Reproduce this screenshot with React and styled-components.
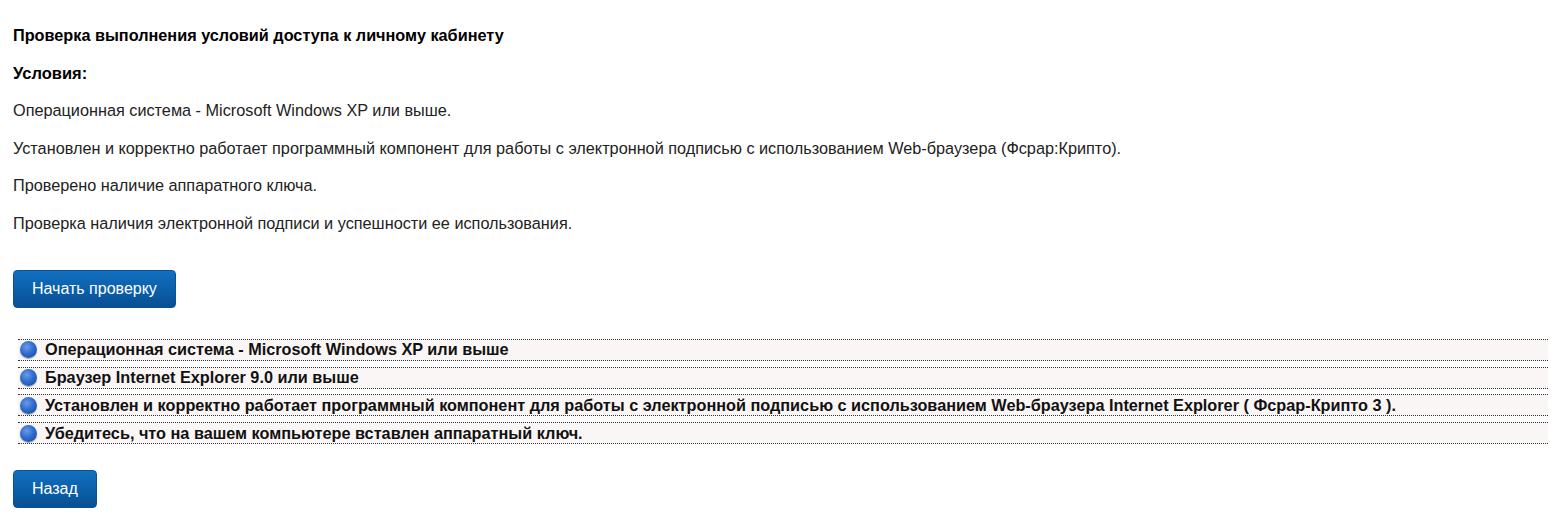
import React from 'react';
import styled, { createGlobalStyle } from 'styled-components';

const GlobalStyle = createGlobalStyle`
  html, body {
    margin: 0;
    padding: 0;
    background: #fff;
  }
  body {
    font-family: "Liberation Sans", Arial, sans-serif;
    color: #222;
  }
`;

const Page = styled.main`
  padding: 26px 12px 9px 13px;
  display: flex;
  flex-direction: column;
`;

const Intro = styled.section`
  display: flex;
  flex-direction: column;
  gap: 19.6px;
`;

const Heading = styled.h1`
  margin: 0;
  font-size: 16.25px;
  line-height: 18px;
  font-weight: bold;
  color: #000;
`;

const Subheading = styled.h2`
  margin: 0;
  font-size: 16.5px;
  line-height: 18px;
  font-weight: bold;
  color: #000;
`;

const Text = styled.p`
  margin: 0;
  font-size: 16.25px;
  line-height: 18px;
  color: #222;
`;

const Button = styled.button`
  align-self: flex-start;
  margin-top: ${({ $top }) => $top}px;
  height: 38px;
  padding: 0 18px;
  border: 1px solid #0a5196;
  border-radius: 4px;
  background: linear-gradient(to bottom, #1170bf 0%, #0b5ea9 55%, #094f93 100%);
  color: #fff;
  font-family: "Liberation Sans", Arial, sans-serif;
  font-size: 16px;
  cursor: pointer;
`;

const Checks = styled.ul`
  list-style: none;
  margin: 31px 0 0 5px;
  padding: 0;
  display: flex;
  flex-direction: column;
  gap: 5.7px;
`;

const Check = styled.li`
  display: flex;
  align-items: center;
  gap: 8px;
  height: 20px;
  padding: 0 2px;
  border-top: 1px dotted #333;
  border-bottom: 1px dotted #333;
  background: #faf6f5;
  font-size: 16.25px;
  font-weight: bold;
  color: #111;
  white-space: nowrap;
`;

const Bullet = styled.span`
  flex: none;
  width: 17px;
  height: 17px;
  border-radius: 50%;
  background: radial-gradient(circle at 40% 35%, #6d9be6 0%, #2f6ccf 45%, #1b4da8 85%, #163f8c 100%);
  box-shadow: 0 1px 1px rgba(0, 0, 0, 0.35);
`;

const conditions = [
  'Операционная система - Microsoft Windows XP или выше.',
  'Установлен и корректно работает программный компонент для работы с электронной подписью с использованием Web-браузера (Фсрар:Крипто).',
  'Проверено наличие аппаратного ключа.',
  'Проверка наличия электронной подписи и успешности ее использования.',
];

const checks = [
  'Операционная система - Microsoft Windows XP или выше',
  'Браузер Internet Explorer 9.0 или выше',
  'Установлен и корректно работает программный компонент для работы с электронной подписью с использованием Web-браузера Internet Explorer ( Фсрар-Крипто 3 ).',
  'Убедитесь, что на вашем компьютере вставлен аппаратный ключ.',
];

const App = () => (
  <>
    <GlobalStyle />
    <Page>
      <Intro>
        <Heading>Проверка выполнения условий доступа к личному кабинету</Heading>
        <Subheading>Условия:</Subheading>
        {conditions.map((item) => (
          <Text key={item}>{item}</Text>
        ))}
      </Intro>

      <Button $top={38}>Начать проверку</Button>

      <Checks>
        {checks.map((item) => (
          <Check key={item}>
            <Bullet />
            {item}
          </Check>
        ))}
      </Checks>

      <Button $top={26}>Назад</Button>
    </Page>
  </>
);

export default App;
